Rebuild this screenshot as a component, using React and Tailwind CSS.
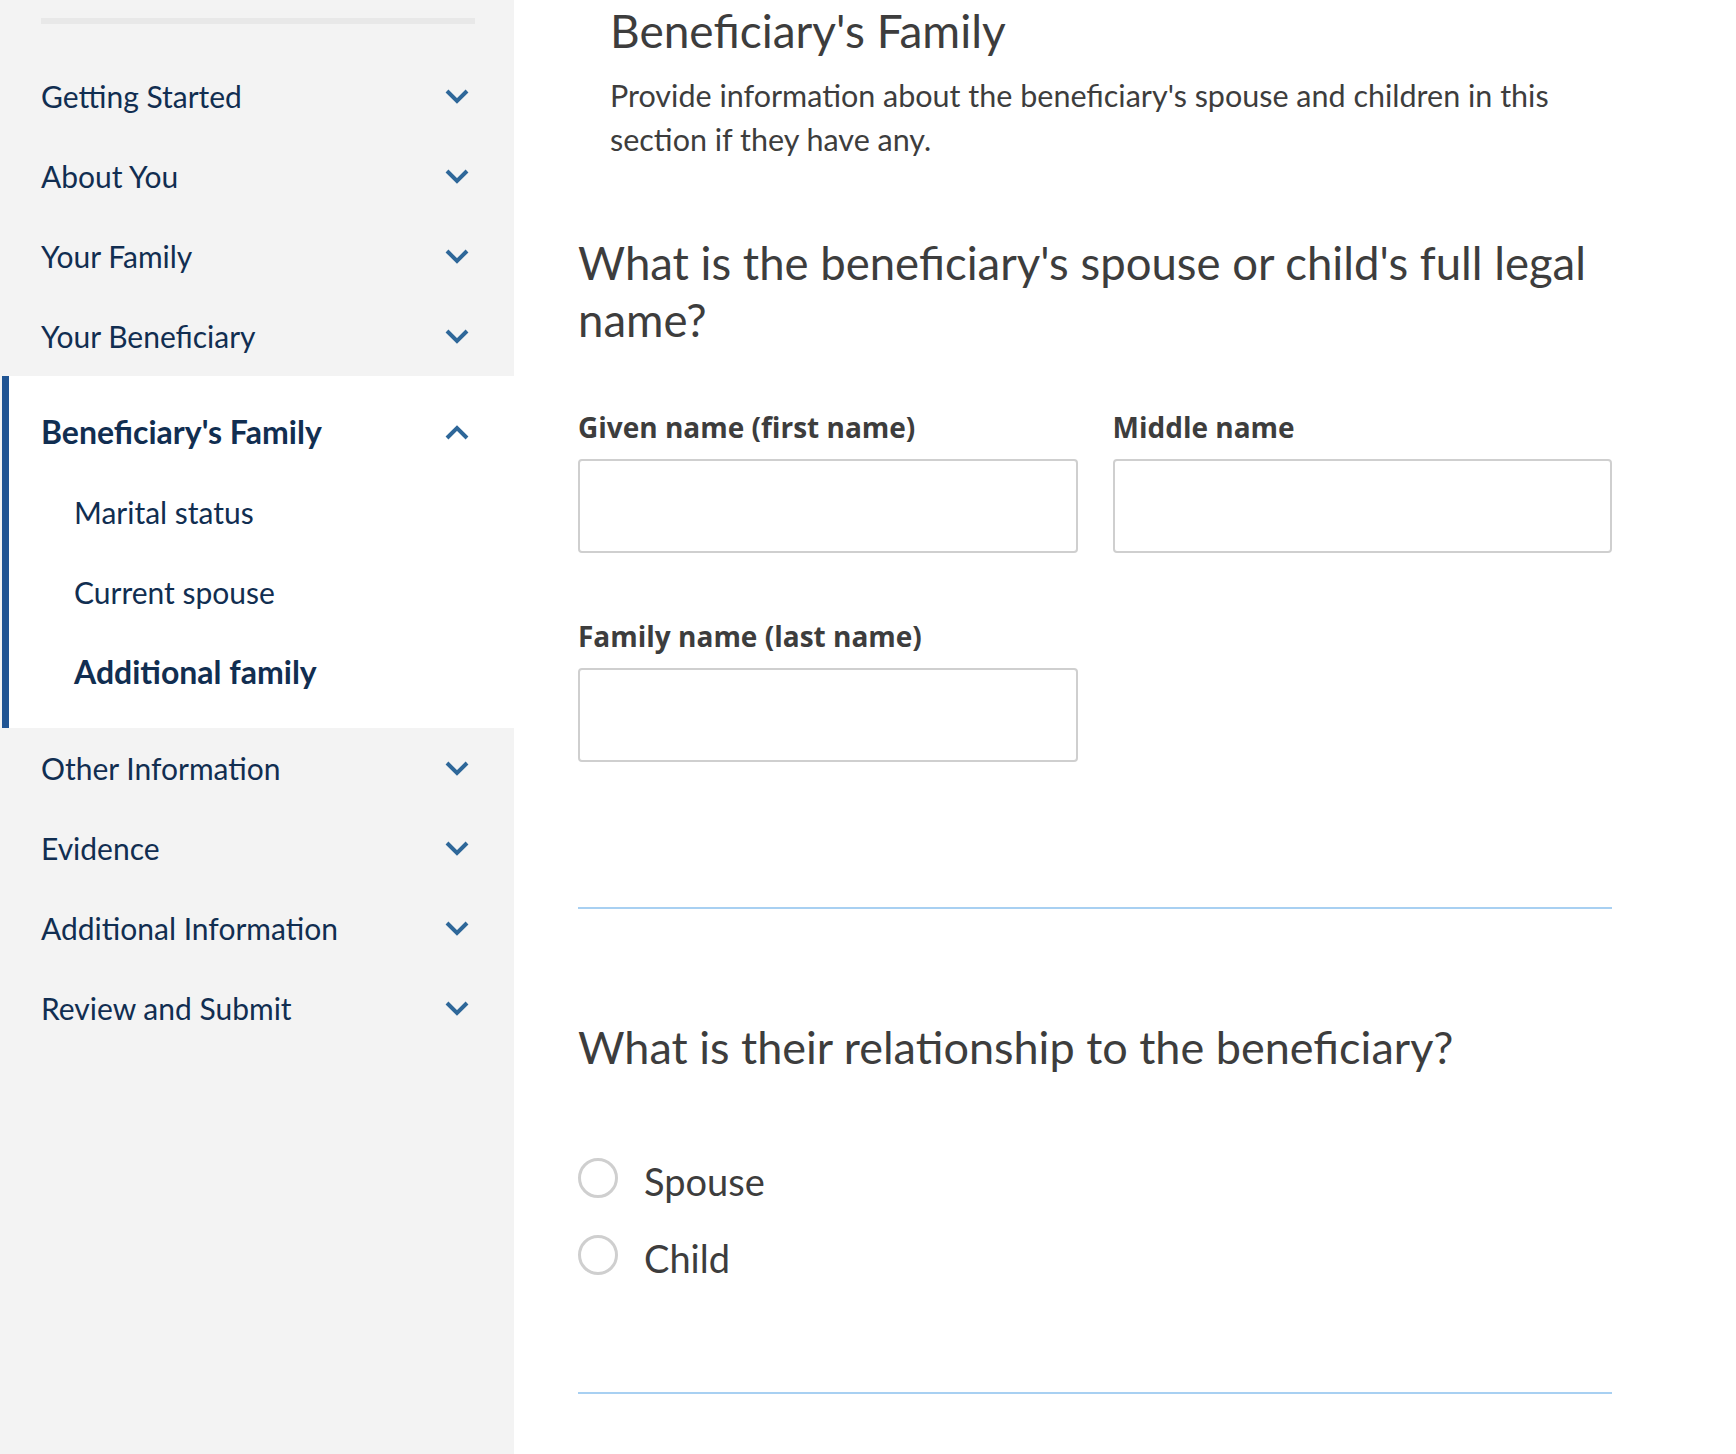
import React from "react";

const navTop = ["Getting Started", "About You", "Your Family", "Your Beneficiary"];
const navBottom = ["Other Information", "Evidence", "Additional Information", "Review and Submit"];
const subItems = [
  { label: "Marital status", active: false },
  { label: "Current spouse", active: false },
  { label: "Additional family", active: true },
];

const Chevron = ({ up = false }) => (
  <svg width="24" height="15" viewBox="0 0 24 15" className="shrink-0">
    <polyline
      points={up ? "2,13 12,3 22,13" : "2,2 12,12 22,2"}
      fill="none"
      stroke="#2e6799"
      strokeWidth="4"
      strokeLinecap="butt"
      strokeLinejoin="miter"
    />
  </svg>
);

const NavRow = ({ label }) => (
  <div className="flex h-[80px] items-center justify-between pl-[41px] pr-[45px]">
    <span className="text-[30px] text-[#112e51]">{label}</span>
    <Chevron />
  </div>
);

const Field = ({ label }) => (
  <div className="flex flex-col">
    <label
      className="text-[28px] font-bold leading-[32px] text-[#3d3d3d]"
      style={{ fontFamily: "'Open Sans', Lato, sans-serif" }}
    >
      {label}
    </label>
    <input
      type="text"
      className="mt-[16px] h-[94px] w-full rounded-[4px] border-2 border-[#cfcfcf] bg-white"
    />
  </div>
);

const Radio = ({ label }) => (
  <label className="flex h-[77px] items-center">
    <span className="h-[40px] w-[40px] shrink-0 rounded-full border-[3px] border-[#cfcfcf] bg-white" />
    <span className="ml-[26px] pt-[6px] text-[38px] leading-[44px] text-[#3d3d3d]">{label}</span>
  </label>
);

export default function App() {
  return (
    <div className="flex min-h-screen w-full bg-white" style={{ fontFamily: "Lato, 'Open Sans', sans-serif" }}>
      {/* Side navigation */}
      <aside className="w-[514px] shrink-0 bg-[#f3f3f3] pt-[18px]">
        <div className="ml-[41px] mr-[39px] h-[6px] bg-[#e8e8e8]" />
        <nav className="mt-[32px]">
          {navTop.map((item) => (
            <NavRow key={item} label={item} />
          ))}

          <div className="ml-[2px] border-l-[7px] border-[#205493] bg-white pt-[16px] pb-[16px]">
            <div className="flex h-[80px] items-center justify-between pl-[32px] pr-[45px]">
              <span className="text-[32px] font-bold text-[#112e51]">Beneficiary's Family</span>
              <Chevron up />
            </div>
            {subItems.map((s) => (
              <div key={s.label} className="flex h-[80px] items-center pl-[65px]">
                <span className={`text-[#112e51] ${s.active ? "text-[32px] font-bold" : "text-[30px]"}`}>
                  {s.label}
                </span>
              </div>
            ))}
          </div>

          {navBottom.map((item) => (
            <NavRow key={item} label={item} />
          ))}
        </nav>
      </aside>

      {/* Main form */}
      <main className="w-[1034px] pl-[64px] pt-[3px] box-content">
        <div className="pl-[32px]">
          <h1 className="text-[46px] leading-[55px] text-[#3d3d3d]">Beneficiary's Family</h1>
          <p className="mt-[15px] max-w-[990px] text-[30.5px] leading-[44px] text-[#3d3d3d]">
            Provide information about the beneficiary's spouse and children in this section if they have any.
          </p>
        </div>

        <h2 className="mt-[73px] text-[45.5px] leading-[57px] text-[#3d3d3d]">
          What is the beneficiary's spouse or child's full legal name?
        </h2>

        <div className="mt-[63px] grid grid-cols-2 gap-x-[35px] gap-y-[67px]">
          <Field label="Given name (first name)" />
          <Field label="Middle name" />
          <Field label="Family name (last name)" />
        </div>

        <hr className="mt-[145px] border-0 border-t-2 border-[#a8d0f2]" />

        <h2 className="mt-[110px] text-[45px] leading-[57px] text-[#3d3d3d]">
          What is their relationship to the beneficiary?
        </h2>

        <div className="mt-[63px] flex flex-col">
          <Radio label="Spouse" />
          <Radio label="Child" />
        </div>

        <hr className="mt-[99px] border-0 border-t-2 border-[#a8d0f2]" />
      </main>
    </div>
  );
}
